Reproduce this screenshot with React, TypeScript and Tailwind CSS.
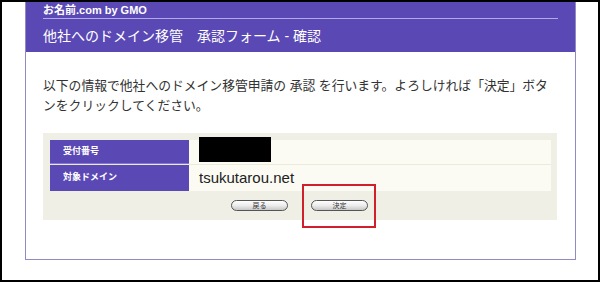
const JP = "font-['Liberation_Sans','Noto_Sans_CJK_JP',sans-serif]";

function PillButton({ label }: { label: string }) {
  return (
    <button className="flex h-[11px] w-[57px] items-center justify-center rounded-full border border-[#555] bg-gradient-to-b from-white via-[#ececec] to-[#c8c8c8] text-[7px] leading-none text-[#333]">
      {label}
    </button>
  );
}

export default function App() {
  return (
    <div className={`h-[282px] w-[600px] overflow-hidden border-2 border-black bg-white ${JP}`}>
      <div className="ml-[23px] h-[258px] w-[551px] border-x border-b border-[#8f89c4] bg-white">
        {/* header */}
        <div className="bg-[#5a48b4] px-[17px]">
          <div className="flex h-[16px] items-center text-[11px] font-bold leading-none text-white">
            お名前.com by GMO
          </div>
          <div className="h-px w-[515px] bg-[#b3a9e6]" />
          <div className="flex h-[33px] items-center text-[14px] font-normal leading-none text-white">
            他社へのドメイン移管　承認フォーム - 確認
          </div>
        </div>

        {/* body */}
        <div className="px-[17px] pt-[24px]">
          <p className="whitespace-nowrap text-[12.8px] leading-[20px] text-[#333]">
            以下の情報で他社へのドメイン移管申請の 承認 を行います。よろしければ「決定」ボタ
            <br />
            ンをクリックしてください。
          </p>

          <div className="relative mt-[17px] h-[87px] w-[514px] bg-[#efefe5] px-[7px] pt-[7px]">
            <div className="w-[501px]">
              <div className="flex h-[25px] border-b border-[#ebebdc]">
                <div className="flex w-[139px] items-center border-b border-[#8478cf] bg-[#5a48b4] pl-[13px] text-[9px] font-bold text-white">
                  受付番号
                </div>
                <div className="relative flex-1 bg-[#fbfbf4]">
                  <div className="absolute left-[10px] top-[-3px] h-[25px] w-[72px] bg-black" />
                </div>
              </div>
              <div className="flex h-[26px]">
                <div className="flex w-[139px] items-center bg-[#5a48b4] pl-[13px] text-[9px] font-bold text-white">
                  対象ドメイン
                </div>
                <div className="flex flex-1 items-center bg-[#fbfbf4] pl-[10px] text-[15px] text-[#222]">
                  tsukutarou.net
                </div>
              </div>
            </div>
            <div className="mt-[9px] flex gap-[23px] pl-[181px]">
              <PillButton label="戻る" />
              <PillButton label="決定" />
            </div>
            <div className="absolute left-[259px] top-[51px] h-[44px] w-[74px] border-2 border-[#d0202c]" />
          </div>
        </div>
      </div>
    </div>
  );
}
